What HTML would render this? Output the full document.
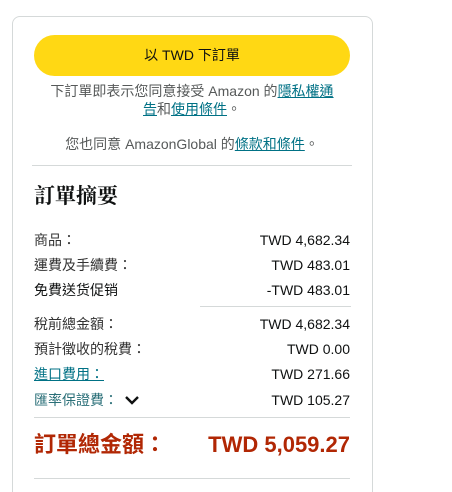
<!DOCTYPE html>
<html><head><meta charset="utf-8"><style>
*{margin:0;padding:0;box-sizing:border-box}
html,body{width:452px;height:492px;overflow:hidden}
body{background:#fff;font-family:"Liberation Sans","Noto Sans CJK TC",sans-serif;color:#0F1111;position:relative}
.card{position:absolute;left:12px;top:16px;width:361px;height:500px;border:1px solid #D5D9D9;border-radius:8px}
.btn{position:absolute;left:34px;top:35px;width:316px;height:41px;border-radius:21px;background:#FFD814;text-align:center;line-height:41px;font-size:14px;color:#0F1111}
.note{position:absolute;left:30px;width:324px;text-align:center;font-size:14px;color:#565959;line-height:18px;white-space:nowrap}
a{color:#007185;text-decoration:underline}
.hr{position:absolute;height:1px;background:#D5D9D9}
h2{position:absolute;left:34px;top:180px;font-family:"Liberation Serif","Noto Serif CJK SC",serif;font-size:21px;font-weight:bold;color:#0F1111}
.row{position:absolute;left:34px;width:316px;font-size:14px;line-height:18px;display:flex;justify-content:space-between;color:#0F1111}
.row span:first-child{color:#333}
.tot{position:absolute;left:34px;width:316px;top:430px;display:flex;justify-content:space-between;color:#B12704;font-weight:bold;font-size:22px;line-height:30px}
</style></head><body>
<div class="card"></div>
<div class="btn">以 TWD 下訂單</div>
<div class="note" style="top:82px">下訂單即表示您同意接受 Amazon 的<a>隱私權通</a><br><a>告</a>和<a>使用條件</a>。</div>
<div class="note" style="top:135px">您也同意 AmazonGlobal 的<a>條款和條件</a>。</div>
<div class="hr" style="left:32px;width:320px;top:165px"></div>
<h2>訂單摘要</h2>
<div class="row" style="top:231px"><span>商品：</span><span>TWD 4,682.34</span></div>
<div class="row" style="top:256px"><span>運費及手續費：</span><span>TWD 483.01</span></div>
<div class="row" style="top:281px"><span style="color:#0F1111">免費送货促销</span><span>-TWD 483.01</span></div>
<div class="hr" style="left:200px;width:151px;top:306px"></div>
<div class="row" style="top:315px"><span>稅前總金額：</span><span>TWD 4,682.34</span></div>
<div class="row" style="top:340px"><span>預計徵收的稅費：</span><span>TWD 0.00</span></div>
<div class="row" style="top:365px"><span><a style="color:#007185">進口費用：</a></span><span>TWD 271.66</span></div>
<div class="row" style="top:391px"><span style="color:#2a6f78">匯率保證費：<svg width="16" height="12" viewBox="0 0 16 12" style="margin-left:6px;vertical-align:-1px"><path d="M2 3l6 6 6-6" stroke="#0F1111" stroke-width="2.4" fill="none"/></svg></span><span>TWD 105.27</span></div>
<div class="hr" style="left:34px;width:316px;top:417px"></div>
<div class="tot"><span style="font-family:'Liberation Sans','Noto Sans CJK TC',sans-serif">訂單總金額：</span><span>TWD 5,059.27</span></div>
<div class="hr" style="left:34px;width:316px;top:478px"></div>
</body></html>
